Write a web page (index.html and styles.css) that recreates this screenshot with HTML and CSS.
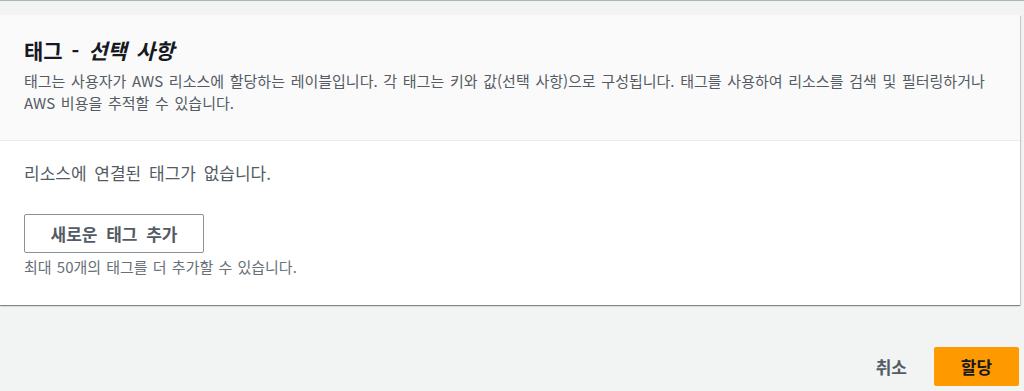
FILE: index.html
```html
<!DOCTYPE html>
<html lang="ko">
<head>
<meta charset="utf-8">
<link rel="stylesheet" href="styles.css">
</head>
<body>
<div class="page">
  <div class="card">
    <div class="card-header">
      <h2 class="title">태그 - <i>선택 사항</i></h2>
      <p class="desc">태그는 사용자가 AWS 리소스에 할당하는 레이블입니다. 각 태그는 키와 값(선택 사항)으로 구성됩니다. 태그를 사용하여 리소스를 검색 및 필터링하거나<br>AWS 비용을 추적할 수 있습니다.</p>
    </div>
    <div class="card-body">
      <p class="empty">리소스에 연결된 태그가 없습니다.</p>
      <button class="btn-normal">새로운 태그 추가</button>
      <p class="hint">최대 50개의 태그를 더 추가할 수 있습니다.</p>
    </div>
  </div>
  <div class="actions">
    <button class="btn-link">취소</button>
    <button class="btn-primary">할당</button>
  </div>
</div>
</body>
</html>
```
FILE: styles.css
```css
* { box-sizing: border-box; }
html, body { margin: 0; padding: 0; }
body {
  width: 1024px;
  height: 391px;
  overflow: hidden;
  background: #f2f3f3;
  font-family: "Noto Sans CJK KR", "Noto Sans", sans-serif;
  color: #16191f;
}
.page {
  border-top: 1px solid #aab7b8;
  padding: 14px 4px 0 0;
}
.card {
  background: #fff;
  box-shadow: 0 1px 1px 0 rgba(0,28,36,0.3), 1px 1px 1px 0 rgba(0,28,36,0.15), -1px 1px 1px 0 rgba(0,28,36,0.15);
  width: 1020px;
}
.card-header {
  background: #fafafa;
  border-bottom: 1px solid #eaeded;
  padding: 21px 16px 0 24px;
  height: 126px;
}
.title {
  margin: 0;
  font-size: 21px;
  line-height: 28px;
  font-weight: 700;
  word-spacing: 3px;
  color: #16191f;
}
.title i { font-style: italic; }
.desc {
  margin: 6px 0 0 0;
  font-size: 15px;
  line-height: 22px;
  word-spacing: 1.5px;
  white-space: nowrap;
  color: #545b64;
}
.card-body {
  padding: 19px 24px 0 24px;
  height: 164px;
}
.empty {
  margin: 0;
  font-size: 17px;
  line-height: 26px;
  word-spacing: 3px;
  color: #545b64;
}
.btn-normal {
  margin-top: 28px;
  width: 180px;
  height: 39px;
  border: 1px solid #879196;
  border-radius: 2px;
  background: #fff;
  font-family: inherit;
  font-size: 17px;
  font-weight: 700;
  word-spacing: 4px;
  color: #545b64;
  padding: 0;
}
.hint {
  margin: 3px 0 0 0;
  font-size: 15px;
  line-height: 22px;
  word-spacing: 1px;
  color: #687078;
}
.actions {
  display: flex;
  justify-content: flex-end;
  align-items: center;
  gap: 27px;
  padding: 42px 1px 0 0;
}
.btn-link {
  border: none;
  background: none;
  padding: 0;
  font-family: inherit;
  font-size: 17px;
  font-weight: 700;
  color: #545b64;
}
.btn-primary {
  width: 85px;
  height: 39px;
  border: none;
  border-radius: 2px;
  background: #ff9900;
  font-family: inherit;
  font-size: 17px;
  font-weight: 700;
  color: #16191f;
}
```
